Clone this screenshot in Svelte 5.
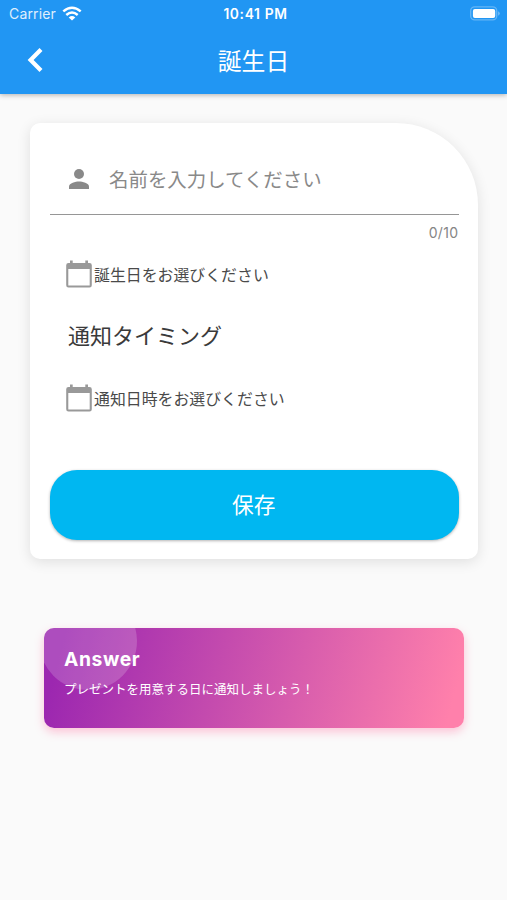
<script>
  const fields = {
    birthday: '誕生日をお選びください',
    notice: '通知日時をお選びください'
  };
</script>

{#snippet calendar()}
  <svg class="cal" width="26" height="28" viewBox="0 0 26 28">
    <path fill="#999" fill-rule="evenodd" d="M4 .5h2.700v2.500h12.600V.5H22V3h1.500A2.300 2.300 0 0 1 25.800 5.300v19.900a2.300 2.300 0 0 1-2.300 2.300h-21A2.300 2.300 0 0 1 .2 25.200V5.300A2.300 2.300 0 0 1 2.500 3H4zM2.300 9v16.400h21.400V9z" />
  </svg>
{/snippet}

<div class="screen">
  <header>
    <div class="status">
      <div class="left">
        <span class="carrier">Carrier</span>
        <svg width="20" height="15" viewBox="0 0 20 15" fill="none" stroke="#fff" stroke-width="2.500">
          <path d="M1.300 5.400Q10-2 18.700 5.400" />
          <path d="M4.300 9Q10 4 15.700 9" />
          <path d="M10 14.500 6.700 11.400Q10 8.600 13.300 11.400z" fill="#fff" stroke="none" />
        </svg>
      </div>
      <span class="time">10:41 PM</span>
      <div class="right">
        <svg width="31" height="15" viewBox="0 0 31 15">
          <rect x=".7" y=".9" width="26" height="13" rx="4" fill="none" stroke="#fff" stroke-opacity=".3" stroke-width="1.400" />
          <rect x="2.900" y="2.900" width="22.300" height="9.200" rx="2" fill="#fff" />
          <path d="M28.200 5.200q3 2.200 0 4.600z" fill="#fff" fill-opacity=".4" />
        </svg>
      </div>
    </div>
    <div class="bar">
      <svg width="20" height="28" viewBox="0 0 20 28" fill="none" stroke="#fff" stroke-width="4.200">
        <path d="M17 3.600 6.600 14 17 24.400" />
      </svg>
      <h1>誕生日</h1>
    </div>
  </header>

  <main>
    <section class="card">
      <div class="input">
        <svg width="20" height="20" viewBox="0 0 20 20" fill="#898989">
          <circle cx="10" cy="5" r="5" />
          <path d="M0 20v-2.500C0 14.200 6.600 12.500 10 12.500s10 1.700 10 5V20z" />
        </svg>
        <span>名前を入力してください</span>
      </div>
      <div class="count">0/10</div>
      <div class="pick">{@render calendar()}<span>{fields.birthday}</span></div>
      <h2>通知タイミング</h2>
      <div class="pick">{@render calendar()}<span>{fields.notice}</span></div>
      <button>保存</button>
    </section>

    <section class="answer">
      <div class="bubble"></div>
      <h3>Answer</h3>
      <p>プレゼントを用意する日に通知しましょう！</p>
    </section>
  </main>
</div>

<style>
  :global(body) {
    margin: 0;
    background: #fafafa;
  }
  .screen {
    width: 507px;
    height: 900px;
    overflow: hidden;
    background: #fafafa;
    font-family: Inter, 'Noto Sans CJK JP', sans-serif;
  }
  .screen * {
    box-sizing: border-box;
  }
  svg {
    display: block;
    flex: none;
  }
  h1, h2, h3, p {
    margin: 0;
    font-weight: 400;
    white-space: nowrap;
  }
  header {
    height: 94px;
    background: #2196f3;
    color: #fff;
    box-shadow: 0 1px 5px rgba(0, 0, 0, 0.3);
  }
  .status {
    display: grid;
    grid-template-columns: 1fr auto 1fr;
    align-items: center;
    height: 27px;
    padding: 0 6px 0 9px;
    font-size: 14px;
  }
  .left {
    display: flex;
    gap: 6px;
    align-items: center;
  }
  .carrier {
    font-size: 14px;
    letter-spacing: 0.15px;
    opacity: 0.85;
  }
  .left svg {
    margin-top: -1px;
  }
  .time {
    font-size: 13.8px;
    font-weight: 600;
    letter-spacing: 0.65px;
    margin-right: -1px;
  }
  .right {
    display: flex;
    justify-content: flex-end;
  }
  .bar {
    display: grid;
    grid-template-columns: 1fr auto 1fr;
    align-items: center;
    height: 66px;
    padding: 0 24px 0 24px;
  }
  h1 {
    padding-top: 3px;
    font-size: 23.8px;
    line-height: 34px;
  }
  main {
    padding: 29px 29.500px 0 30px;
  }
  .card {
    height: 436px;
    padding: 20px 19px 0 20px;
    background: #fff;
    border-radius: 10px 82px 10px 10px;
    box-shadow: 0 3px 14px rgba(0, 0, 0, 0.11);
  }
  .input {
    display: flex;
    align-items: center;
    gap: 20px;
    height: 72px;
    padding-left: 19px;
    border-bottom: 1px solid #969696;
    color: #898989;
    font-size: 19.45px;
  }
  .count {
    height: 35px;
    padding-top: 8px;
    text-align: right;
    font-size: 14px;
    line-height: 20px;
    color: #858585;
    letter-spacing: 0.35px;
  }
  .pick {
    display: flex;
    align-items: center;
    gap: 2px;
    height: 48px;
    padding-left: 16px;
    color: #4a4a4a;
    font-size: 15.9px;
  }
  h2 {
    height: 76px;
    padding-left: 18px;
    color: #3a3a3a;
    font-size: 22px;
    line-height: 76px;
  }
  button {
    display: block;
    width: 100%;
    height: 69.500px;
    margin-top: 48px;
    border: 0;
    border-radius: 27px;
    background: #00b7f1;
    color: #fff;
    font: 400 21.7px/68px 'Noto Sans CJK JP', sans-serif;
    padding: 0 1px 1px 0;
    box-shadow: 0 1px 3px rgba(0, 0, 0, 0.3);
  }
  .answer {
    position: relative;
    height: 100px;
    margin: 68.500px 13.500px 0 13.500px;
    padding: 17px 20.500px;
    overflow: hidden;
    border-radius: 10px;
    background: linear-gradient(105deg, #9c27b0 5%, #ff80ab 96%);
    color: #fff;
    box-shadow: 0 4px 10px rgba(255, 128, 171, 0.45);
  }
  .bubble {
    position: absolute;
    left: -5px;
    top: -36px;
    width: 98px;
    height: 98px;
    border-radius: 50%;
    background: rgba(255, 255, 255, 0.18);
  }
  h3 {
    position: relative;
    font-size: 19.3px;
    font-weight: 700;
    line-height: 28px;
    letter-spacing: 0.6px;
  }
  p {
    position: relative;
    margin-top: 8px;
    font-size: 12.5px;
    line-height: 18px;
  }
</style>
